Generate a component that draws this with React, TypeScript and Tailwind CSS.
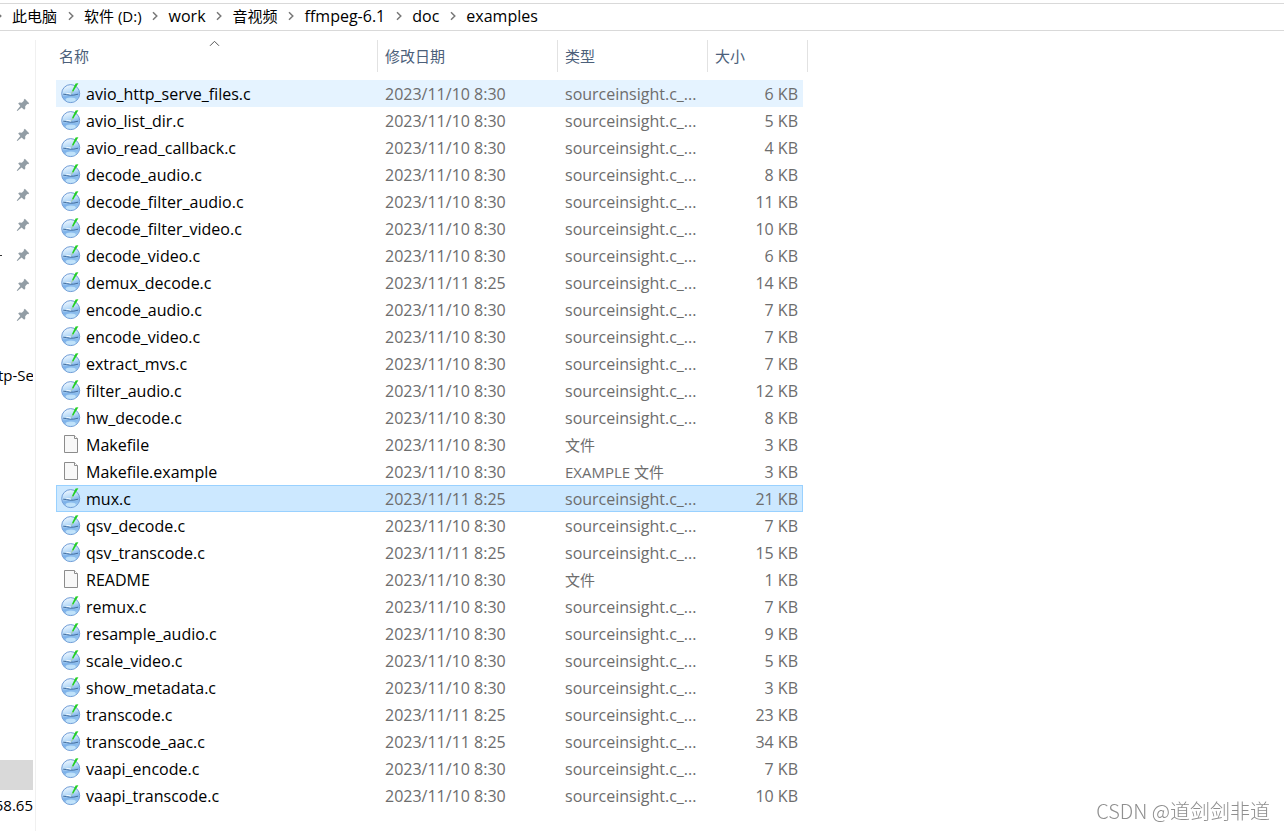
import React from "react";

type Kind = "source" | "plain";
type FileRow = { name: string; date: string; type: string; size: string; kind: Kind };

const src = (name: string, size: number, date = "2023/11/10 8:30"): FileRow => ({
  name,
  date,
  type: "sourceinsight.c_...",
  size: `${size} KB`,
  kind: "source",
});
const plain = (name: string, size: number, type = "文件"): FileRow => ({
  name,
  date: "2023/11/10 8:30",
  type,
  size: `${size} KB`,
  kind: "plain",
});

const LATE = "2023/11/11 8:25";

const files: FileRow[] = [
  src("avio_http_serve_files.c", 6),
  src("avio_list_dir.c", 5),
  src("avio_read_callback.c", 4),
  src("decode_audio.c", 8),
  src("decode_filter_audio.c", 11),
  src("decode_filter_video.c", 10),
  src("decode_video.c", 6),
  src("demux_decode.c", 14, LATE),
  src("encode_audio.c", 7),
  src("encode_video.c", 7),
  src("extract_mvs.c", 7),
  src("filter_audio.c", 12),
  src("hw_decode.c", 8),
  plain("Makefile", 3),
  plain("Makefile.example", 3, "EXAMPLE 文件"),
  src("mux.c", 21, LATE),
  src("qsv_decode.c", 7),
  src("qsv_transcode.c", 15, LATE),
  plain("README", 1),
  src("remux.c", 7),
  src("resample_audio.c", 9),
  src("scale_video.c", 5),
  src("show_metadata.c", 3),
  src("transcode.c", 23, LATE),
  src("transcode_aac.c", 34, LATE),
  src("vaapi_encode.c", 7),
  src("vaapi_transcode.c", 10),
];

const crumbs = [
  { label: "此电脑" },
  { label: "软件 (D:)" },
  { label: "work", latin: true },
  { label: "音视频" },
  { label: "ffmpeg-6.1", latin: true },
  { label: "doc", latin: true },
  { label: "examples", latin: true },
];

function Chevron() {
  return (
    <svg width="6" height="10" viewBox="0 0 6 10" fill="none" stroke="#777" strokeWidth="1.5" aria-hidden="true">
      <path d="M1 1.2 4.8 5 1 8.8" />
    </svg>
  );
}

function SourceIcon() {
  return (
    <svg className="shrink-0" width="20" height="22" viewBox="0 0 20 22" aria-hidden="true">
      <defs>
        <linearGradient id="globe" x1="0.3" y1="0" x2="0.6" y2="1">
          <stop offset="0" stopColor="#f2f9ff" />
          <stop offset="0.4" stopColor="#b9dbf8" />
          <stop offset="0.62" stopColor="#86b8ec" />
          <stop offset="1" stopColor="#c4eaff" />
        </linearGradient>
      </defs>
      <circle cx="9.7" cy="10.6" r="9" fill="url(#globe)" stroke="#6f9cd6" strokeWidth="1" />
      <path d="M1.4 12.2Q10 14.6 18 12.2A8.5 8.5 0 0 1 1.4 12.2Z" fill="#6fa8e6" opacity="0.4" />
      <ellipse cx="9.7" cy="16.6" rx="5" ry="2.2" fill="#d8f3ff" opacity="0.65" />
      <path d="M2.2 11.2Q6 11.6 8.6 12.2Q12.5 12.6 17.2 11.2" stroke="#47709f" strokeWidth="1" fill="none" />
      <path d="M5.4 10.4Q8 10.2 10 11.2" stroke="#f4fbff" strokeWidth="1" fill="none" />
      <path d="M14.6 0.6 17.4 0.2 12.3 8.6 11 9.2 11.2 7.6Z" fill="#22cf22" />
      <path d="M11.1 7.8 12.2 8.6 9.8 11.4Z" fill="#a5cf98" />
    </svg>
  );
}

function PlainIcon() {
  return (
    <svg className="shrink-0" width="20" height="22" viewBox="0 0 20 22" aria-hidden="true">
      <path d="M3.5 1.5H13.5L16.5 4.5V18.5H3.5Z" fill="#f8f8f8" stroke="#8c8c8c" />
      <path d="M13.5 1.5V4.5H16.5" fill="#fff" stroke="#8c8c8c" />
    </svg>
  );
}

function Pin() {
  return (
    <svg width="14" height="14" viewBox="0 0 14 14" fill="#929da5" aria-hidden="true">
      <path d="M8.8.8 13.2 5.2 12.2 6.3 11.2 6.1 9.2 8.3 9.3 10.6 8.2 11.7 5.6 9.4 1.4 13.1.7 12.5 4.3 8.1 2.2 5.6 3.3 4.6 5.8 4.7 7.9 2.8 7.7 1.9Z" />
    </svg>
  );
}

function HeaderCell({ label, className }: { label: string; className: string }) {
  return (
    <div className={`h-8 border-r border-[#e2e2e2] ${className}`}>
      <button type="button" className="flex h-full w-full items-center text-[#4c607a]">
        {label}
      </button>
    </div>
  );
}

function rowClass(name: string, index: number) {
  if (name === "mux.c") return "h-[27px] bg-[#cce8ff] outline -outline-offset-1 outline-[#99d1ff]";
  if (index === 0) return "h-[27px] bg-[#e5f3ff]";
  return "h-[27px]";
}

export default function App() {
  return (
    <div className="flex min-h-screen flex-col bg-white pt-[3px] font-['Open_Sans','Noto_Sans_CJK_SC',sans-serif] text-[15px] leading-5 text-black">
      <nav className="flex h-7 items-center overflow-hidden border-y border-[#d9d9d9] pb-0.5">
        {crumbs.map((c, i) => (
          <React.Fragment key={c.label}>
            <span className={i === 0 ? "flex w-3 shrink-0 justify-start overflow-hidden" : "flex w-[27px] shrink-0 justify-center"}>
              <span className={i === 0 ? "-ml-1" : ""}>
                <Chevron />
              </span>
            </span>
            <button type="button" className={c.latin ? "text-base leading-5 whitespace-nowrap" : "whitespace-nowrap"}>
              {c.label}
            </button>
          </React.Fragment>
        ))}
      </nav>

      <div className="flex flex-1 pt-[9px]">
        <aside className="flex w-9 shrink-0 flex-col border-r border-[#f0f0f0] pt-[50px]">
          {Array.from({ length: 8 }, (_, i) => (
            <div key={i} className="flex h-[30px] items-center">
              <span className={i === 5 ? "h-px w-0.5 bg-[#333]" : "w-0.5"} />
              <span className="ml-3.5">
                <Pin />
              </span>
            </div>
          ))}
          <div className="mt-[30px] flex h-[30px] w-[33px] items-center overflow-hidden whitespace-nowrap">
            <span className="-ml-0.5">tp-Se</span>
          </div>
          <div className="mt-[370px] h-[30px] w-[33px] bg-[#d9d9d9]" />
          <div className="flex h-[30px] w-[33px] items-center justify-end overflow-hidden">58.65</div>
        </aside>

        <main className="pl-5">
          <table className="w-[747px] table-fixed border-collapse">
            <colgroup>
              <col className="w-[322px]" />
              <col className="w-[180px]" />
              <col className="w-[150px]" />
              <col className="w-[95px]" />
            </colgroup>
            <thead>
              <tr className="h-10 text-left align-top">
                <th className="relative p-0 font-normal">
                  <HeaderCell label="名称" className="pl-[3px]" />
                  <svg
                    className="absolute top-0 left-[153px]"
                    width="11"
                    height="7"
                    viewBox="0 0 11 7"
                    fill="none"
                    stroke="#555"
                    aria-hidden="true"
                  >
                    <path d="M1 5.8 5.5 1.3 10 5.8" />
                  </svg>
                </th>
                <th className="p-0 font-normal">
                  <HeaderCell label="修改日期" className="pl-[7px]" />
                </th>
                <th className="p-0 font-normal">
                  <HeaderCell label="类型" className="pl-[7px]" />
                </th>
                <th className="p-0 font-normal">
                  <HeaderCell label="大小" className="-mr-[5px] pl-[7px]" />
                </th>
              </tr>
            </thead>
            <tbody className="text-base leading-5 text-[#6d6d6d]">
              {files.map((f, i) => (
                <tr key={f.name} className={rowClass(f.name, i)}>
                  <td className="p-0 pl-[5px]">
                    <div className="flex h-[27px] items-center gap-[5px] text-black">
                      {f.kind === "source" ? <SourceIcon /> : <PlainIcon />}
                      <span>{f.name}</span>
                    </div>
                  </td>
                  <td className="p-0 pl-[7px] whitespace-nowrap">{f.date}</td>
                  <td className={f.kind === "plain" ? "p-0 pl-[7px] text-[15px] whitespace-nowrap" : "p-0 pl-[7px] whitespace-nowrap"}>
                    {f.type}
                  </td>
                  <td className="p-0 pr-[5px] text-right whitespace-nowrap">{f.size}</td>
                </tr>
              ))}
            </tbody>
          </table>
        </main>
      </div>

      <div className="fixed right-3.5 bottom-1.5 font-['Noto_Sans_CJK_SC',sans-serif] text-[20px] leading-7 font-light text-[#8f8f8f]">
        CSDN @道剑剑非道
      </div>
    </div>
  );
}
